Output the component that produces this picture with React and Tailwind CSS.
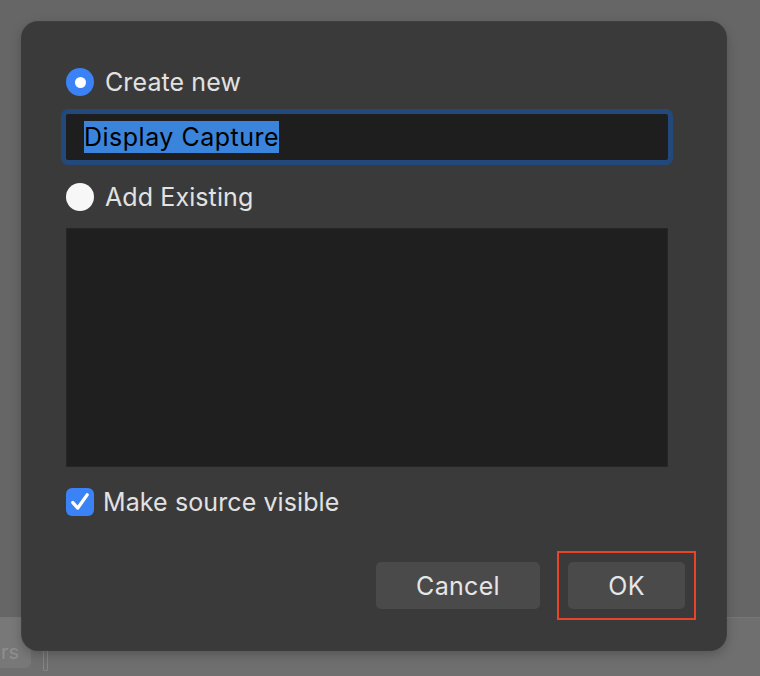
import React, { useState } from "react";

export default function App() {
  const [mode, setMode] = useState("new");
  const [visible, setVisible] = useState(true);

  return (
    <div
      className="relative w-[760px] h-[676px] overflow-hidden bg-[#666666] flex flex-col"
      style={{ fontFamily: "Inter, 'Noto Sans', sans-serif" }}
    >
      <div className="flex-1" />
      {/* Underlying window strip */}
      <div className="h-[59px] bg-[#6f6f6f] border-t border-[#777777] flex items-start gap-[12px]">
        <div className="w-[31px] h-[50px] rounded-r-[6px] bg-[#787878] flex items-end pb-[6px] pl-[1px] text-[20px] text-[#8e8e8e] leading-none">
          rs
        </div>
        <div className="mt-[32px] w-[5px] h-[21px] border border-[#858585] rounded-[1px]" />
      </div>

      {/* Dialog */}
      <div className="absolute left-[22px] top-[22px] w-[704px] h-[628px] rounded-[16px] bg-[#3a3a3a] shadow-[0_0_0_1px_rgba(40,40,40,0.6),0_4px_12px_rgba(0,0,0,0.25)] flex flex-col pl-[44px] pr-[58px] pt-[46px] text-[#e2e2e2]">
        <button
          type="button"
          onClick={() => setMode("new")}
          className="flex items-center gap-[11px] h-[28px] focus:outline-none"
        >
          <span
            className={`w-[28px] h-[28px] rounded-full flex items-center justify-center ${
              mode === "new" ? "bg-[#3b82f6]" : "bg-[#f7f7f7]"
            }`}
          >
            {mode === "new" && <span className="w-[11px] h-[11px] rounded-full bg-white" />}
          </span>
          <span className="text-[25px] leading-none tracking-[0.1px]">Create new</span>
        </button>

        <div className="mt-[13px] -ml-[5px] w-[612px] h-[56px] rounded-[7px] border-[5px] border-[#23497c] bg-[#1e1e1e] flex items-center pl-[18px]">
          <span className="bg-[#3b84dc] text-black text-[25px] leading-[32px] tracking-[0.5px]">
            Display Capture
          </span>
        </div>

        <button
          type="button"
          onClick={() => setMode("existing")}
          className="mt-[18px] flex items-center gap-[11px] h-[28px] focus:outline-none"
        >
          <span
            className={`w-[28px] h-[28px] rounded-full flex items-center justify-center ${
              mode === "existing" ? "bg-[#3b82f6]" : "bg-[#f7f7f7]"
            }`}
          >
            {mode === "existing" && <span className="w-[11px] h-[11px] rounded-full bg-white" />}
          </span>
          <span className="text-[25px] leading-none tracking-[0.1px]">Add Existing</span>
        </button>

        <div className="mt-[17px] w-[602px] h-[239px] bg-[#1f1f1f] border border-[#262626]" />

        <button
          type="button"
          onClick={() => setVisible((v) => !v)}
          className="mt-[21px] flex items-center gap-[9px] h-[28px] focus:outline-none"
        >
          <span
            className={`w-[28px] h-[28px] rounded-[6px] flex items-center justify-center ${
              visible ? "bg-[#3b82f6]" : "bg-[#f7f7f7]"
            }`}
          >
            {visible && (
              <svg width="22" height="22" viewBox="0 0 20 20" fill="none">
                <path
                  d="M3.5 10.5 L8 15.5 L16.5 3.5"
                  stroke="white"
                  strokeWidth="3"
                  strokeLinecap="round"
                  strokeLinejoin="round"
                />
              </svg>
            )}
          </span>
          <span className="text-[25px] leading-none tracking-[0.1px]">Make source visible</span>
        </button>

        <div className="mt-[46px] -mr-[17px] flex justify-end gap-[28px]">
          <button
            type="button"
            className="w-[164px] h-[47px] pt-[3px] rounded-[5px] bg-[#4a4a4a] text-[25px] tracking-[0.3px] text-[#e6e6e6] focus:outline-none"
          >
            Cancel
          </button>
          <div className="relative">
            <button
              type="button"
              className="w-[117px] h-[47px] pt-[3px] rounded-[5px] bg-[#4a4a4a] text-[25px] tracking-[0.3px] text-[#e6e6e6] focus:outline-none"
            >
              OK
            </button>
            <div className="absolute -left-[11px] -top-[11px] w-[139px] h-[69px] border-2 border-[#e8442a] pointer-events-none" />
          </div>
        </div>
      </div>
    </div>
  );
}
